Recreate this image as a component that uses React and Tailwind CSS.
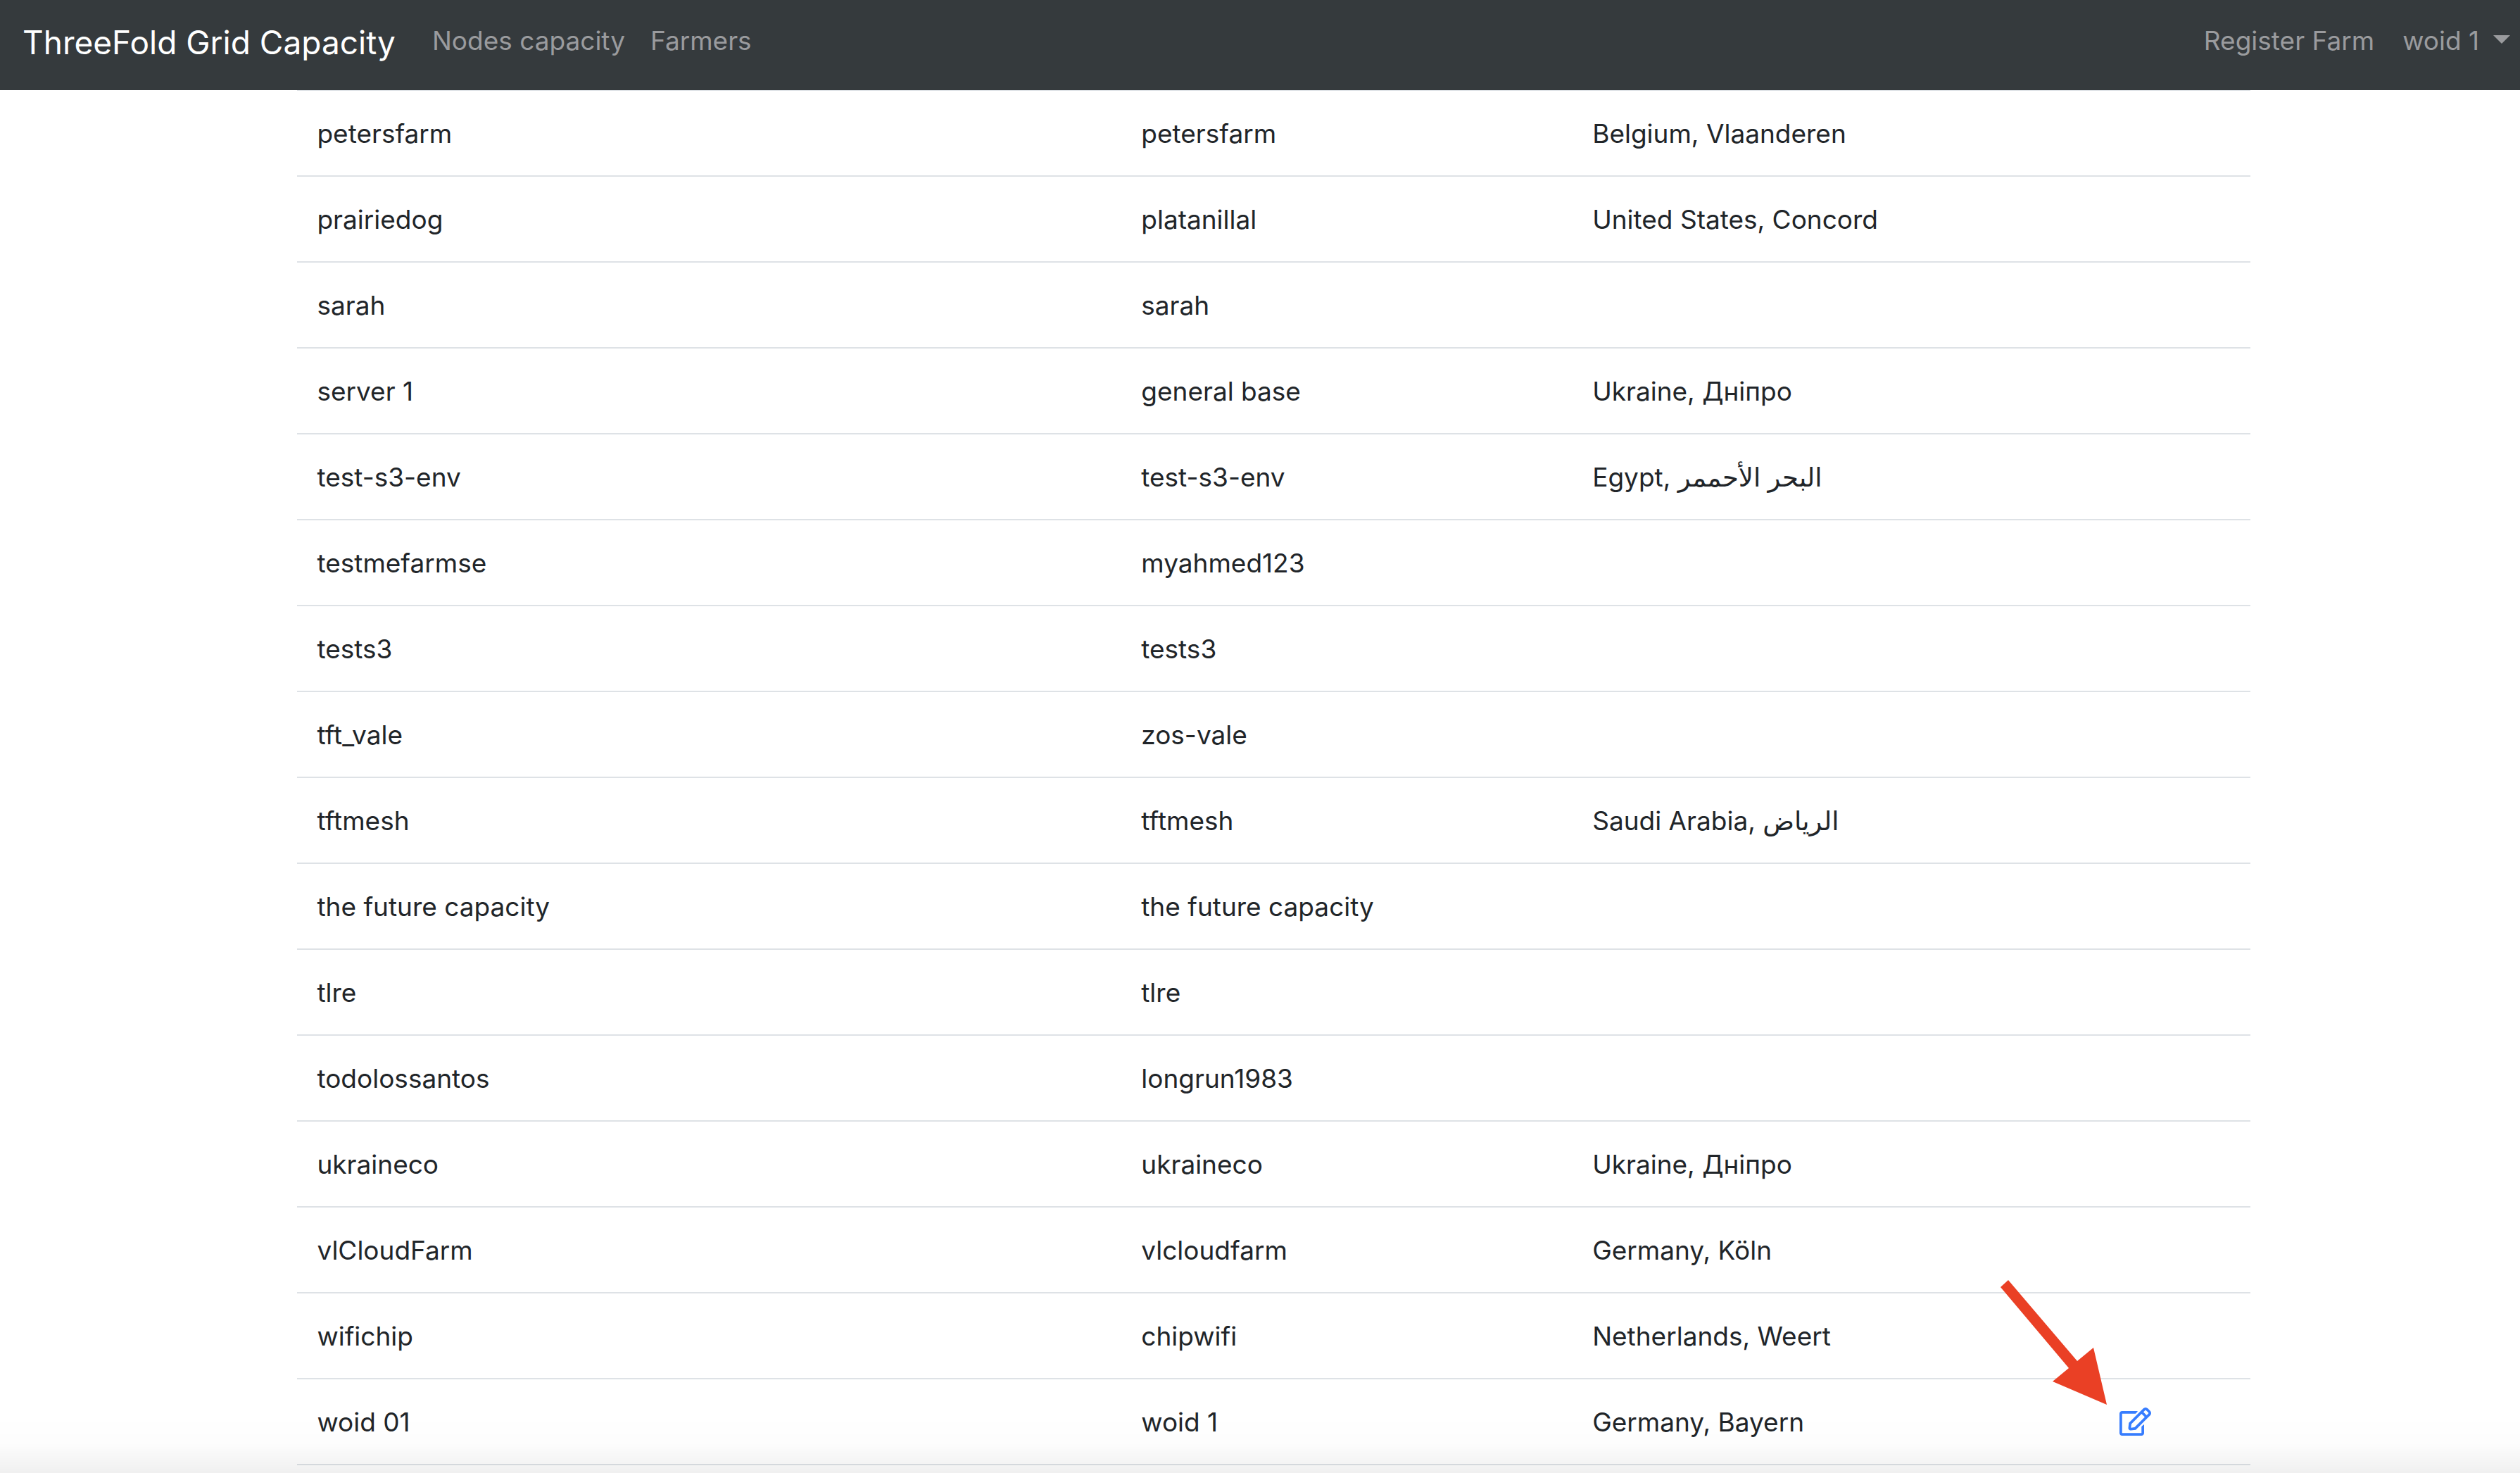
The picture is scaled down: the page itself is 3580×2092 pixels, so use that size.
import { FaRegEdit } from "react-icons/fa";

const farms = [
  { name: "petersfarm", farmer: "petersfarm", location: "Belgium, Vlaanderen" },
  { name: "prairiedog", farmer: "platanillal", location: "United States, Concord" },
  { name: "sarah", farmer: "sarah", location: "" },
  { name: "server 1", farmer: "general base", location: "Ukraine, Дніпро" },
  { name: "test-s3-env", farmer: "test-s3-env", location: "Egypt, البحر الأحممر" },
  { name: "testmefarmse", farmer: "myahmed123", location: "" },
  { name: "tests3", farmer: "tests3", location: "" },
  { name: "tft_vale", farmer: "zos-vale", location: "" },
  { name: "tftmesh", farmer: "tftmesh", location: "Saudi Arabia, الرياض" },
  { name: "the future capacity", farmer: "the future capacity", location: "" },
  { name: "tlre", farmer: "tlre", location: "" },
  { name: "todolossantos", farmer: "longrun1983", location: "" },
  { name: "ukraineco", farmer: "ukraineco", location: "Ukraine, Дніпро" },
  { name: "vlCloudFarm", farmer: "vlcloudfarm", location: "Germany, Köln" },
  { name: "wifichip", farmer: "chipwifi", location: "Netherlands, Weert" },
  { name: "woid 01", farmer: "woid 1", location: "Germany, Bayern", editable: true },
];

function Navbar() {
  return (
    <nav className="relative z-10 flex h-32 items-center bg-[#353a3d] pr-3.5 pb-3 pl-8 text-[#9a9b9e]">
      <a href="#" className="mr-13 pt-1 text-[46px] text-white">
        ThreeFold Grid Capacity
      </a>
      <a href="#" className="mr-9">Nodes capacity</a>
      <a href="#">Farmers</a>
      <a href="#" className="mr-10 ml-auto">Register Farm</a>
      <button type="button" className="flex items-center gap-5">
        woid 1
        <svg viewBox="0 0 24 12" className="mb-1 h-3 w-6" fill="currentColor" aria-hidden="true">
          <path d="M0 0h24L12 12z" />
        </svg>
      </button>
    </nav>
  );
}

function EditButton() {
  return (
    <div className="relative flex w-fit">
      <button type="button" aria-label="Edit farm" className="text-[#377dff]">
        <FaRegEdit className="h-10 w-[45px]" />
      </button>
      <svg
        viewBox="0 0 151 177"
        className="pointer-events-none absolute right-[63px] bottom-11 h-[177px] w-[151px] max-w-none"
        fill="#ea4025"
        aria-hidden="true"
      >
        <path d="M0 10 11 0 109 115 132 96 151 177 74 144 97 125Z" />
      </svg>
    </div>
  );
}

function FarmRow({ farm }) {
  const cell = "h-[122px] border-t-2 border-[#dee2e6] px-7 pt-0.5 pb-0";
  return (
    <tr>
      <td className={cell}>{farm.name}</td>
      <td className={cell}>{farm.farmer}</td>
      <td className={cell}>{farm.location}</td>
      <td className="border-t-2 border-[#dee2e6] px-7 py-0">{farm.editable && <EditButton />}</td>
    </tr>
  );
}

export default function App() {
  return (
    <div className="min-h-screen bg-white font-[Inter,'DejaVu_Sans',sans-serif] text-[37px] leading-[60px] text-[#212529]">
      <Navbar />
      <main className="-mt-px ml-[11.8%] w-[77.5%]">
        <table className="w-full table-fixed border-separate border-spacing-0 border-b-2 border-[#dee2e6]">
          <colgroup>
            <col className="w-[42.2%]" />
            <col className="w-[23.1%]" />
            <col className="w-[27%]" />
            <col />
          </colgroup>
          <tbody>
            {farms.map((farm) => (
              <FarmRow key={farm.name} farm={farm} />
            ))}
          </tbody>
        </table>
      </main>
      <div className="pointer-events-none fixed inset-x-0 bottom-0 h-20 bg-linear-to-b from-black/0 via-black/1 to-black/6" />
    </div>
  );
}
